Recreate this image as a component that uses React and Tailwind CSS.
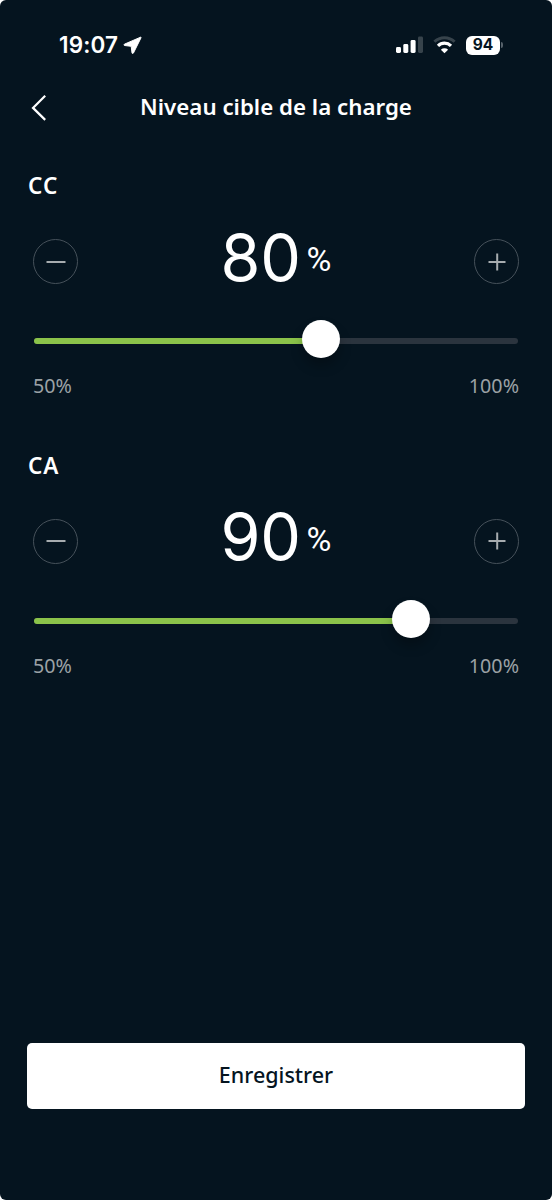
import { useState } from "react";

const MIN = 50;
const MAX = 100;

function StatusBar() {
  return (
    <div className="flex h-[90px] items-center justify-between pl-[59px] pr-[49px] font-['Inter']">
      <div className="flex items-center gap-[5px]">
        <span className="text-[22.5px] leading-none font-semibold tracking-[0.15px]">19:07</span>
        <svg width="19" height="19" viewBox="0 0 19 19" fill="currentColor" stroke="currentColor" strokeLinejoin="round">
          <path d="M17.6 1.2 1.4 8.2c-.6.3-.5 1.3.2 1.3l6.6.8.8 6.6c0 .7 1.1.8 1.4.2L18.1 1.6c.1-.3-.2-.5-.5-.4Z" />
        </svg>
      </div>
      <div className="flex items-center">
        <svg width="28" height="18" viewBox="0 0 28 18" fill="currentColor">
          <rect x="0" y="11" width="5" height="6" rx="1.4" />
          <rect x="7.3" y="8" width="5" height="9" rx="1.4" />
          <rect x="14.6" y="4" width="5" height="13" rx="1.4" />
          <rect x="22" y="0.5" width="5" height="16.5" rx="1.4" opacity="0.2" />
        </svg>
        <svg className="ml-[9px]" width="23" height="18" viewBox="0 0 23 18" fill="none" stroke="currentColor">
          <path d="M1.4 5.8a14.4 14.4 0 0 1 20.2 0" strokeWidth="3" opacity="0.2" />
          <path d="M5 9.8a9.3 9.3 0 0 1 13 0" strokeWidth="3.2" />
          <path d="M11.5 17.3 7.9 13.7a5.1 5.1 0 0 1 7.2 0Z" fill="currentColor" stroke="none" />
        </svg>
        <div className="ml-[10px] flex h-[19px] w-[34px] items-center justify-center rounded-[6px] bg-white text-[15.5px] leading-none font-bold text-[#05141f]">
          94
        </div>
        <div className="ml-[1px] h-[6px] w-[2px] rounded-r-full bg-[#56616a]" />
      </div>
    </div>
  );
}

function Header() {
  return (
    <header className="grid h-[34px] grid-cols-[84px_1fr_84px] items-center">
      <button className="pl-[31px]" aria-label="Retour">
        <svg width="16" height="27" viewBox="0 0 16 27" fill="none" stroke="currentColor" strokeWidth="2.2">
          <path d="M14.2 1.8 2 13.9l12.2 12" />
        </svg>
      </button>
      <h1 className="text-center text-[22.3px] leading-[34px] font-semibold whitespace-nowrap">
        Niveau cible de la charge
      </h1>
    </header>
  );
}

function StepButton({ label, plus, onClick }) {
  return (
    <button
      aria-label={label}
      onClick={onClick}
      className="flex size-[45px] items-center justify-center rounded-full border border-[#46515a] text-[#a7acaf]"
    >
      <svg width="20" height="20" viewBox="0 0 20 20" fill="none" stroke="currentColor" strokeWidth="2">
        <path d={plus ? "M1.5 10h17M10.2 1.5v17" : "M.5 10h19"} />
      </svg>
    </button>
  );
}

function Slider({ value }) {
  const ratio = (value - MIN) / (MAX - MIN);

  return (
    <div className="relative mx-[7px] h-[6px] rounded-full bg-[#2b343e]">
      <div
        className="h-full rounded-full bg-[#8bc34a]"
        style={{ width: `calc(${ratio} * (100% - 37px) + 18px)` }}
      />
      {/* The thumb stays within the ends of the track */}
      <div
        className="absolute top-[-18px] size-[38px] rounded-full bg-white shadow-[0_8px_12px_rgba(0,0,0,0.25)]"
        style={{ left: `calc(${ratio} * (100% - 37px))` }}
      />
    </div>
  );
}

function ChargeLevel({ title, initial }) {
  const [value, setValue] = useState(initial);

  return (
    <section className="h-[279.5px]">
      <h2 className="pl-px text-[22.5px] leading-[34px] font-semibold tracking-[1px]">{title}</h2>
      <div className="mt-[36px] flex h-[45px] items-center justify-between px-[6px]">
        <StepButton label="Diminuer" onClick={() => setValue((v) => Math.max(MIN, v - 10))} />
        <div className="flex items-center">
          <span className="pb-[7px] font-['Inter'] text-[64.5px] leading-[45px] font-normal tracking-[-0.3px]">{value}</span>
          <span className="ml-[6px] pb-[4px] font-['Roboto'] text-[34px] leading-[45px] font-normal">%</span>
        </div>
        <StepButton plus label="Augmenter" onClick={() => setValue((v) => Math.min(MAX, v + 10))} />
      </div>
      <div className="mt-[54px]">
        <Slider value={value} />
      </div>
      <div className="mt-[27px] flex justify-between px-[6px] text-[19.7px] leading-[30px] text-[#9ba1a5]">
        <span>{MIN}%</span>
        <span>{MAX}%</span>
      </div>
    </section>
  );
}

export default function App() {
  return (
    <div className="h-[1200px] w-[552px] bg-white">
      <div className="flex h-full flex-col overflow-hidden rounded-[6px] bg-[#05141f] font-['Noto_Sans',sans-serif] text-white">
        <StatusBar />
        <Header />
        <main className="mt-[45px] flex-1 px-[27px]">
          <ChargeLevel title="CC" initial={80} />
          <ChargeLevel title="CA" initial={90} />
        </main>
        <footer className="px-[27px] pb-[91px]">
          <button className="h-[66px] w-full rounded-[5px] bg-white pb-px text-[21.5px] font-medium text-[#05141f]">
            Enregistrer
          </button>
        </footer>
      </div>
    </div>
  );
}
